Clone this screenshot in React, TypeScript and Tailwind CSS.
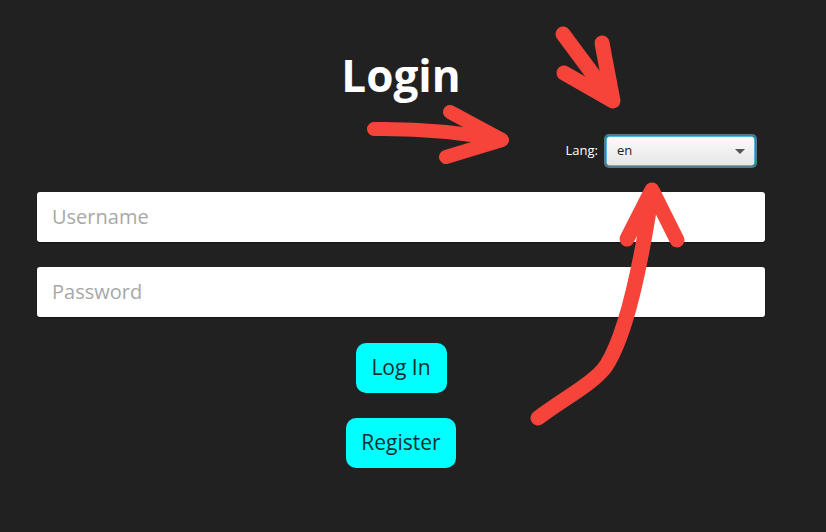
import React from "react";

export default function App() {
  return (
    <div
      className="relative w-[826px] h-[532px] overflow-hidden bg-[#212121]"
      style={{ fontFamily: '"Open Sans", "Noto Sans", sans-serif' }}
    >
      <div className="flex flex-col w-[728px] ml-[37px] pt-[49px]">
        <h1 className="text-center text-white font-bold text-[44px] leading-[52px]">Login</h1>
        <div className="flex justify-end items-center mt-[35px] pr-[10px] gap-[8px]">
          <span className="text-white text-[13px]">Lang:</span>
          <div className="w-[149px] h-[30px] rounded-[3px] border border-[#4fb8e0] shadow-[0_0_0_2px_rgba(140,210,245,0.5)] bg-gradient-to-b from-[#fbfbfb] to-[#e6e6e6] flex items-center justify-between pl-[10px] pr-[9px]">
            <span className="text-[#222] text-[13px]">en</span>
            <span className="w-0 h-0 border-l-[5px] border-r-[5px] border-t-[5px] border-l-transparent border-r-transparent border-t-[#555]" />
          </div>
        </div>
        <div className="mt-[26px] h-[50px] rounded-[3px] bg-white shadow-[0_1px_1px_rgba(0,0,0,0.35)] flex items-center pl-[15px]">
          <span className="text-[#a8a8a8] text-[20px]">Username</span>
        </div>
        <div className="mt-[25px] h-[50px] rounded-[3px] bg-white shadow-[0_1px_1px_rgba(0,0,0,0.35)] flex items-center pl-[15px]">
          <span className="text-[#a8a8a8] text-[20px]">Password</span>
        </div>
        <div className="flex flex-col items-center mt-[26px] gap-[25px]">
          <div className="h-[50px] w-[91px] rounded-[10px] bg-[#0ff] flex items-center justify-center text-[#10302f] text-[21px]">Log In</div>
          <div className="h-[50px] w-[110px] rounded-[10px] bg-[#0ff] flex items-center justify-center text-[#10302f] text-[21px]">Register</div>
        </div>
      </div>
      <svg
        className="absolute inset-0 pointer-events-none"
        width="826"
        height="532"
        viewBox="0 0 826 532"
        fill="none"
        stroke="#f6443a"
        strokeLinecap="round"
        strokeLinejoin="round"
      >
        <g strokeWidth="14">
          <path d="M374 129 Q 440 128 500 140" />
          <path d="M450 112 L 502 140 L 446 157" />
        </g>
        <g strokeWidth="15">
          <path d="M563 34 L 612 100" />
          <path d="M602 43 L 613 101 L 564 73" />
        </g>
        <g strokeWidth="15">
          <path d="M538 418 C 565 398, 595 382, 606 366 C 626 335, 640 270, 652 192" />
          <path d="M627 239 L 652 190 L 677 240" />
        </g>
      </svg>
    </div>
  );
}
